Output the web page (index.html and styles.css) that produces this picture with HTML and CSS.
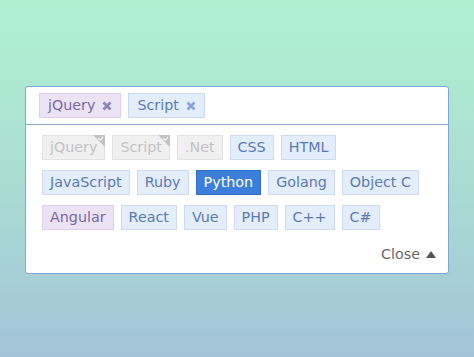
FILE: index.html
```html
<!DOCTYPE html>
<html>
<head>
<meta charset="utf-8">
<link rel="stylesheet" href="styles.css">
</head>
<body>
<div class="picker">
  <div class="selected">
    <span class="tag tag-purple">jQuery<svg class="x" viewBox="0 0 10 10"><path d="M1.5 1.5L8.5 8.5M8.5 1.5L1.5 8.5"/></svg></span>
    <span class="tag tag-blue">Script<svg class="x" viewBox="0 0 10 10"><path d="M1.5 1.5L8.5 8.5M8.5 1.5L1.5 8.5"/></svg></span>
  </div>
  <div class="dropdown">
    <div class="row">
      <span class="opt opt-disabled picked">jQuery<svg class="corner" viewBox="0 0 12 12"><path d="M0 0H12V12Z"/><path class="tick" d="M5 3.2L7.6 5.2L10 1.6"/></svg></span>
      <span class="opt opt-disabled picked">Script<svg class="corner" viewBox="0 0 12 12"><path d="M0 0H12V12Z"/><path class="tick" d="M5 3.2L7.6 5.2L10 1.6"/></svg></span>
      <span class="opt opt-disabled">.Net</span>
      <span class="opt">CSS</span>
      <span class="opt">HTML</span>
    </div>
    <div class="row">
      <span class="opt">JavaScript</span>
      <span class="opt">Ruby</span>
      <span class="opt opt-active">Python</span>
      <span class="opt">Golang</span>
      <span class="opt">Object C</span>
    </div>
    <div class="row">
      <span class="opt opt-purple">Angular</span>
      <span class="opt">React</span>
      <span class="opt">Vue</span>
      <span class="opt">PHP</span>
      <span class="opt">C++</span>
      <span class="opt">C#</span>
    </div>
    <div class="footer">
      <span class="close">Close<svg class="tri" viewBox="0 0 10 7"><path d="M0 7L5 0L10 7Z"/></svg></span>
    </div>
  </div>
</div>
</body>
</html>
```

FILE: styles.css
```css
html, body {
  margin: 0;
  padding: 0;
}
body {
  width: 474px;
  height: 357px;
  overflow: hidden;
  background: linear-gradient(to bottom, #b0f1d1 0%, #abdfd2 45%, #a3c4d8 100%);
  font-family: "DejaVu Sans", Verdana, sans-serif;
  font-size: 14.3px;
  padding-top: 86px;
  padding-left: 25px;
  box-sizing: border-box;
}
.picker {
  width: 424px;
  height: 188px;
  box-sizing: border-box;
  background: #fff;
  border: 1px solid #7ea6d6;
  border-radius: 3px;
  display: flex;
  flex-direction: column;
}
.selected {
  height: 38px;
  box-sizing: border-box;
  border-bottom: 1px solid #86a6cf;
  padding: 6px 13px 0;
  display: flex;
  gap: 7px;
  align-items: flex-start;
}
.tag {
  height: 25px;
  box-sizing: border-box;
  line-height: 23px;
  padding: 0 8px;
  display: inline-flex;
  align-items: center;
  gap: 7px;
  border: 1px solid;
}
.tag-purple {
  background: #ebe3f4;
  border-color: #ddd0ec;
  color: #7b68a6;
}
.tag-purple .x path { stroke: #8d87bd; }
.tag-blue {
  background: #e3edfb;
  border-color: #c9daf1;
  color: #5c7bb5;
}
.tag-blue .x path { stroke: #8aa3da; }
.x {
  width: 10px;
  height: 10px;
}
.x path {
  fill: none;
  stroke-width: 2.8;
  stroke-linecap: butt;
}
.dropdown {
  flex: 1;
  padding: 10px 12px 0 16px;
  display: flex;
  flex-direction: column;
  gap: 10px;
}
.row {
  display: flex;
  gap: 7px;
}
.opt {
  position: relative;
  height: 25px;
  box-sizing: border-box;
  line-height: 23px;
  padding: 0 7px;
  border: 1px solid #cbdcf2;
  background: #e3edfb;
  color: #5c7bb5;
  white-space: nowrap;
}
.opt-disabled {
  background: #f0f0f0;
  border-color: #e3e3e3;
  color: #c3c3c3;
}
.opt-purple {
  background: #ebe3f4;
  border-color: #ddd0ec;
  color: #7b68a6;
}
.opt-active {
  background: #3b7fdb;
  border-color: #2f6fc9;
  color: #fff;
}
.corner {
  position: absolute;
  top: -1px;
  right: -1px;
  width: 12px;
  height: 12px;
}
.corner path {
  fill: #c2c2c2;
}
.corner .tick {
  fill: none;
  stroke: #f2f2f2;
  stroke-width: 1.2;
}
.footer {
  display: flex;
  justify-content: flex-end;
  margin-top: 6px;
}
.close {
  color: #666;
  display: inline-flex;
  align-items: center;
  gap: 6px;
}
.tri {
  width: 10px;
  height: 7px;
  margin-top: 1px;
}
.tri path {
  fill: #555;
}
```
